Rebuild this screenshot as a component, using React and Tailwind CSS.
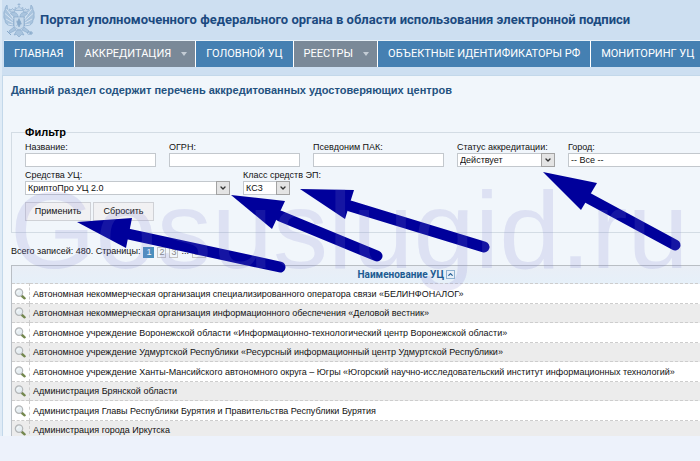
import React from 'react';
import { ChevronDown, ChevronUp } from 'lucide-react';

const menu = [
  { title: 'ГЛАВНАЯ' },
  { title: 'АККРЕДИТАЦИЯ', sub: true },
  { title: 'ГОЛОВНОЙ УЦ' },
  { title: 'РЕЕСТРЫ', sub: true },
  { title: 'ОБЪЕКТНЫЕ ИДЕНТИФИКАТОРЫ РФ' },
  { title: 'МОНИТОРИНГ УЦ' },
];

const centers = [
  'Автономная некоммерческая организация специализированного оператора связи «БЕЛИНФОНАЛОГ»',
  'Автономная некоммерческая организация информационного обеспечения «Деловой вестник»',
  'Автономное учреждение Воронежской области «Информационно-технологический центр Воронежской области»',
  'Автономное учреждение Удмуртской Республики «Ресурсный информационный центр Удмуртской Республики»',
  'Автономное учреждение Ханты-Мансийского автономного округа – Югры «Югорский научно-исследовательский институт информационных технологий»',
  'Администрация Брянской области',
  'Администрация Главы Республики Бурятия и Правительства Республики Бурятия',
  'Администрация города Иркутска',
];

const Emblem = () => (
  <svg viewBox="0 0 32 36" className="w-8 h-9 shrink-0" fill="#a9c4de" stroke="#86a8c9" strokeWidth="0.6">
    <path d="M16 1v4M14.500 2.500h3" />
    <path d="M12.500 8.500l-.5-3 2 1 2-2 2 2 2-1-.5 3zM7 10l-.5-3 1.500 1 1.500-1.500L11 8l1-.5-.5 2.500zM20.500 10L20 7.500l1 .5 1.500-1.500L24 8l1.500-1-.5 3z" fill="#c1d5e9" />
    <path d="M15 15c0-4-3-5-6-4.500L6.500 12l2.500 1c1 0 2 2 3 4zM17 15c0-4 3-5 6-4.500l2.500 1.500-2.500 1c-1 0-2 2-3 4z" />
    <path d="M11 16C7 15 5 10 4 3 2 5 2 7 2 8 1 9 .500 11 1 13c-.5 2 0 4 1 5 0 2 1 4 3 5l6 1zM21 16c4-1 6-6 7-13 2 2 2 4 2 5 1 1 1.500 3 1 5 .5 2 0 4-1 5 0 2-1 4-3 5l-6 1z" />
    <path d="M3.500 7l7 10M2 11.500l8 7M3 17l7 4M5 22l5 1M28.500 7l-7 10M30 11.500l-8 7M29 17l-7 4M27 22l-5 1" stroke="#dbe8f5" strokeWidth="0.9" fill="none" />
    <path d="M11 15h10v8c0 3-3 4-5 5-2-1-5-2-5-5z" fill="#c6d9eb" />
    <path d="M16 16.500l-2 4 2 4.500 2-4zM13 19l6 3M13.500 24l4-5" fill="#89abcb" />
    <path d="M11 25l-5 4 1 2 6-3zM21 25l5 4-1 2-6-3zM14 28l-3 5 2.500-.5L16 35l2.500-2.500 2.500.5-3-5z" />
    <path d="M4 29l4 4M28 29v4M26 31h4" fill="none" strokeWidth="1" />
    <circle cx="26" cy="31" r="1.500" fill="none" />
  </svg>
);

const Magnifier = () => (
  <svg viewBox="0 0 12 12" className="w-3 h-3 block">
    <path d="M8 8l2.600 2.300" stroke="#74884f" strokeWidth="2.400" strokeLinecap="round" />
    <circle cx="5" cy="4.600" r="3.700" fill="#e6eef2" stroke="#b3b6b8" strokeWidth="1.200" />
    <path d="M3.200 4.400c.3-1.200 1-1.600 2-1.600" stroke="#fff" fill="none" />
  </svg>
);

const TextField = ({ id, label }) => (
  <div className="w-[131px]">
    <label htmlFor={id} className="block h-3 leading-3">{label}</label>
    <input id={id} type="text" className="block w-full h-[14px] px-1 bg-white border border-[#c3c8cd]" />
  </div>
);

const SelectField = ({ id, label, value, width }) => (
  <div className={width}>
    <label htmlFor={id} className="block h-3 leading-3 whitespace-nowrap">{label}</label>
    <div className="relative">
      <select id={id} className="block w-full h-[14px] pl-[2px] pr-4 leading-3 appearance-none bg-white border border-[#c3c8cd]">
        <option>{value}</option>
      </select>
      <span className="absolute right-0 top-0 w-[14px] h-[14px] flex items-center justify-center border border-[#a3a3a3] bg-[#e4e4e4] pointer-events-none">
        <ChevronDown className="w-2 h-2 text-[#333]" strokeWidth={4} />
      </span>
    </div>
  </div>
);

// Указатели на поля фильтра
const Arrows = () => (
  <svg width="700" height="461" className="absolute left-0 top-0 pointer-events-none" fill="#00009b" stroke="#00009b" strokeLinecap="round">
    <path d="M77 222l55-4-6 30z" strokeWidth="0" />
    <path d="M128 234l152 33" strokeWidth="11" />
    <path d="M231 195l54 6-13 28z" strokeWidth="0" />
    <path d="M280 216l97 40" strokeWidth="11" />
    <path d="M300 189l54 1-9 29z" strokeWidth="0" />
    <path d="M350 206l134 41" strokeWidth="11" />
    <path d="M543 172l54 11-16 27z" strokeWidth="0" />
    <path d="M588 198l87 47" strokeWidth="11" />
  </svg>
);

const App = () => {
  return (
    <div className="relative h-screen overflow-hidden flex flex-col bg-[#edf2fb] font-['Liberation_Sans',sans-serif] text-[9px] text-[#111]">
      <div className="flex-1 min-h-0 overflow-hidden bg-[#cddff1] border-l-2 border-[#dfebf6]">
        <header className="h-10 flex items-center pl-[1px] gap-[5px]">
          <Emblem />
          <h1 className="text-[13px] leading-5 font-bold text-[#1b4a80] whitespace-nowrap font-['Roboto',sans-serif]">
            Портал уполномоченного федерального органа в области использования электронной подписи
          </h1>
        </header>

        <nav className="flex ml-[2px] h-[27px] border-t border-[#e6f0f8] text-[11px] text-white whitespace-nowrap font-['Roboto',sans-serif]">
          {menu.map((item) => (
            <a
              key={item.title}
              href="#"
              className={`flex items-center border-r border-white last:flex-1 last:border-r-0 ${item.sub ? 'bg-[#7a8998] pl-[10px] pr-2 gap-[10px]' : 'bg-[#4580b2] px-[10px]'}`}
            >
              {item.title}
              {item.sub && <span className="border-x-[3px] border-x-transparent border-t-[4px] border-t-[#c3ccd5]" />}
            </a>
          ))}
        </nav>

        <main className="mt-2 min-w-[790px] min-h-full pl-2 pr-2 bg-[#f1f6fb] border-l border-t border-[#c3d8ea]">
          <h2 className="pt-[7px] text-[11px] leading-[14px] font-bold text-[#24527f]">
            Данный раздел содержит перечень аккредитованных удостоверяющих центров
          </h2>

          <form onSubmit={(e) => e.preventDefault()}>
            <fieldset className="mt-7 h-[108px] px-[13px] border border-[#d3dce4]">
              <legend className="h-[14px] leading-[14px] text-[11px] font-bold text-black">Фильтр</legend>
              <div className="mt-[2px] flex gap-[13px]">
                <TextField id="name" label="Название:" />
                <TextField id="ogrn" label="ОГРН:" />
                <TextField id="alias" label="Псевдоним ПАК:" />
                <SelectField id="status" label="Статус аккредитации:" value="Действует" width="w-[98px]" />
                <SelectField id="city" label="Город:" value="-- Все --" width="flex-1" />
              </div>
              <div className="mt-[2px] flex gap-[13px]">
                <SelectField id="tools" label="Средства УЦ:" value="КриптоПро УЦ 2.0" width="w-[205px]" />
                <SelectField id="class" label="Класс средств ЭП:" value="КС3" width="w-[47px]" />
              </div>
              <div className="mt-[7px] flex gap-[2px]">
                <button type="submit" className="w-[66px] h-[19px] border border-[#cfd1d6] bg-[#f1f1f3]">Применить</button>
                <button type="reset" className="w-[61px] h-[19px] border border-[#cfd1d6] bg-[#f1f1f3]">Сбросить</button>
              </div>
            </fieldset>
          </form>

          <div className="mt-[13px] flex items-center gap-[3px] h-3">
            <span>Всего записей: 480. Страницы:</span>
            <a href="#" className="px-[2px] leading-[9px] bg-[#4a8fbd] border border-[#4a8fbd] text-white">1</a>
            <a href="#" className="px-[1px] leading-[9px] border border-[#c4c4c4] text-[#888]">2</a>
            <a href="#" className="px-[1px] leading-[9px] border border-[#c4c4c4] text-[#888]">3</a>
            <span>...</span>
            <a href="#" className="px-[1px] leading-[9px] border border-[#c4c4c4] text-[#888]">33</a>
          </div>

          <table className="mt-[7px] w-full border-collapse border border-[#b9bec4]">
            <thead>
              <tr className="h-[18px] bg-linear-to-b from-[#e9eef6] to-[#e6f0f9]">
                <th className="w-[18px]" />
                <th className="p-0 text-[10px] leading-[14px] text-[#1d5b92] font-['Roboto',sans-serif]">
                  <span className="inline-flex items-center gap-[2px]">
                    Наименование УЦ
                    <span className="w-[9px] h-[9px] flex items-center justify-center border border-[#8fb2d0]">
                      <ChevronUp className="w-[7px] h-[7px]" strokeWidth={4} />
                    </span>
                  </span>
                </th>
              </tr>
            </thead>
            <tbody>
              {centers.map((name) => (
                <tr key={name} className="h-[20px] even:h-[19px] bg-white even:bg-[#ececec] border-t border-dashed border-[#cdcdcd]">
                  <td className="p-0 pl-[2px] border-r border-dashed border-[#cdcdcd]"><Magnifier /></td>
                  <td className="p-0 pl-[3px] leading-3 whitespace-nowrap">{name}</td>
                </tr>
              ))}
            </tbody>
          </table>
        </main>
      </div>
      <footer className="h-[25px] shrink-0" />

      <Arrows />
      <div className="absolute left-[10px] top-[168px] text-[110px] leading-[124px] text-[#7d7bcf]/17 whitespace-nowrap pointer-events-none">
        Gosuslugid.ru
      </div>
    </div>
  );
};

export default App;
